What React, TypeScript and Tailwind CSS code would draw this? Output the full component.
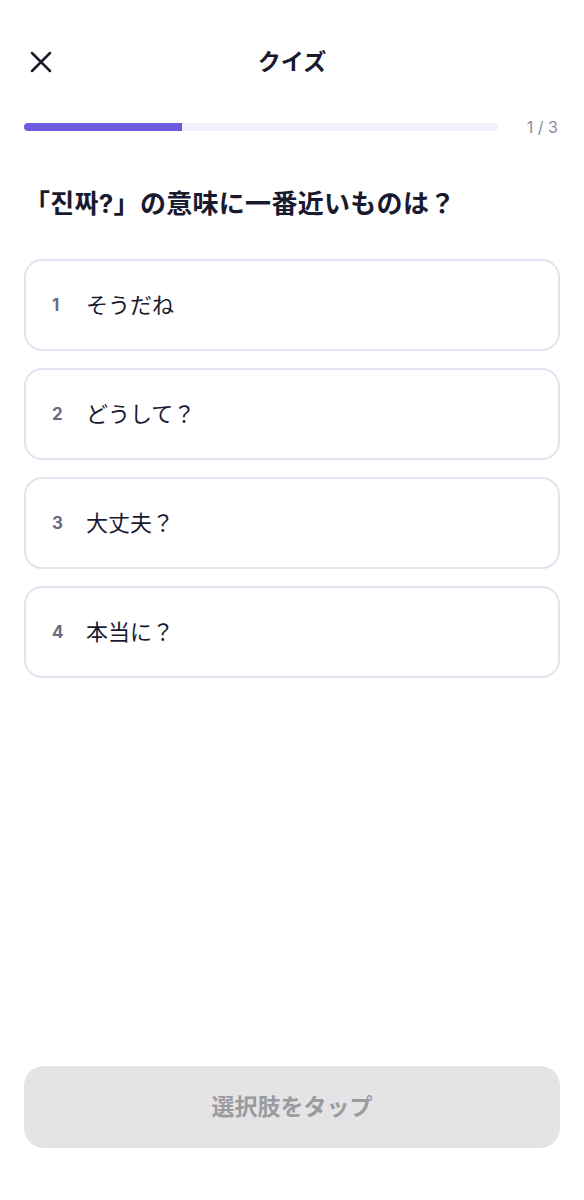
import React from "react";

const options = [
  { n: 1, t: "そうだね" },
  { n: 2, t: "どうして？" },
  { n: 3, t: "大丈夫？" },
  { n: 4, t: "本当に？" },
];

export default function App() {
  return (
    <div
      className="w-[584px] h-[1200px] bg-white flex flex-col px-6"
      style={{ fontFamily: '"Inter", "Noto Sans CJK JP", sans-serif' }}
    >
      <div className="relative h-[60px] mt-[32px] flex items-center justify-center">
        <button className="absolute left-[4px] top-1/2 -translate-y-1/2 w-[26px] h-[26px] flex items-center justify-center">
          <svg width="24" height="24" viewBox="0 0 24 24" fill="none" stroke="#1a1a2e" strokeWidth="2.5" strokeLinecap="round">
            <path d="M3 3 L21 21 M21 3 L3 21" />
          </svg>
        </button>
        <h1 className="text-[23px] font-bold text-[#1a1a2e]">クイズ</h1>
      </div>

      <div className="flex items-center gap-6 mt-[26px] h-[18px]">
        <div className="flex-1 h-[8px] rounded-full bg-[#f1f0fb] overflow-hidden">
          <div className="h-full w-1/3 bg-[#6b5ce0]" />
        </div>
        <span className="text-[16px] text-[#8a8a96] w-[36px] text-right mr-[2px]">1 / 3</span>
      </div>

      <h2 className="mt-[52px] text-[26px] leading-[32px] font-bold text-[#1a1a2e] tracking-[0.3px]">
        「진짜?」の意味に一番近いものは？
      </h2>

      <div className="mt-[39px] flex flex-col gap-[17px]">
        {options.map((o) => (
          <div
            key={o.n}
            className="h-[92px] rounded-[18px] border-2 border-[#e4e3ef] flex items-center pl-[26px]"
          >
            <span className="w-[34px] text-[17px] font-bold text-[#6b6b80] translate-y-[1px]">{o.n}</span>
            <span className="text-[22px] text-[#1a1a2e]">{o.t}</span>
          </div>
        ))}
      </div>

      <div className="flex-1" />

      <button className="mb-[52px] h-[82px] rounded-[20px] bg-[#e4e4e6] text-[23px] font-bold text-[#9b9b9e]">
        選択肢をタップ
      </button>
    </div>
  );
}
